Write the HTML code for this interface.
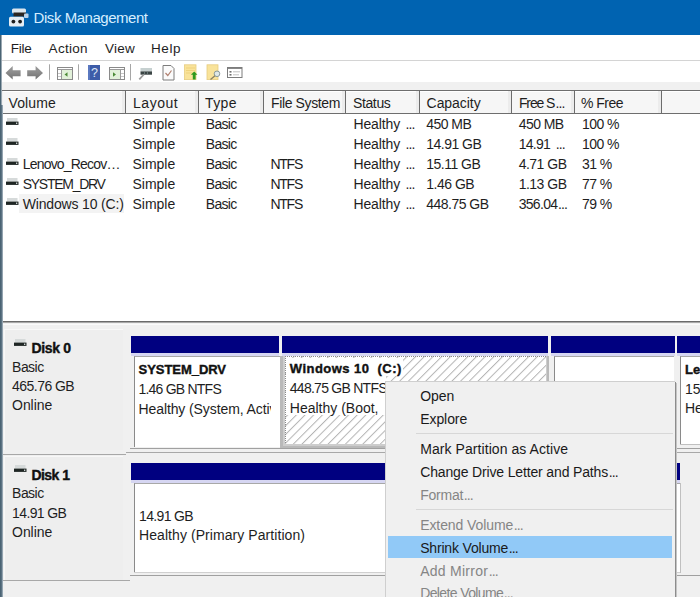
<!DOCTYPE html>
<html><head><meta charset="utf-8">
<style>
html,body{margin:0;padding:0;}
body{width:700px;height:597px;overflow:hidden;position:relative;background:#f0f0f0;font-family:"Liberation Sans",sans-serif;}
.a{position:absolute;}
.tx{position:absolute;white-space:pre;line-height:20px;font-family:"Liberation Sans",sans-serif;}
</style></head><body>
<!-- title bar -->
<div class="a" style="left:0;top:0;width:700px;height:35px;background:#0063b1"></div>
<!-- menu bar -->
<div class="a" style="left:0;top:35px;width:700px;height:25px;background:#fff"></div>
<div class="a" style="left:0;top:60px;width:700px;height:1px;background:#d4d4d4"></div>
<!-- toolbar -->
<div class="a" style="left:0;top:61px;width:700px;height:21px;background:#fff"></div>
<div class="a" style="left:0;top:82px;width:700px;height:8px;background:#f0f0f0"></div>
<div class="a" style="left:0;top:90px;width:700px;height:1px;background:#6e6e6e"></div>
<!-- header -->
<div class="a" style="left:3px;top:91px;width:697px;height:22px;background:#f6f6f6;border-top:1px solid #fff;box-sizing:border-box"></div>
<div class="a" style="left:0;top:113px;width:700px;height:1px;background:#6e6e6e"></div>
<div class="a" style="left:125px;top:90px;width:1px;height:23px;background:#6c6c6c"></div>
<div class="a" style="left:122px;top:91px;width:3px;height:22px;background:#ececec"></div>
<div class="a" style="left:198px;top:90px;width:1px;height:23px;background:#6c6c6c"></div>
<div class="a" style="left:195px;top:91px;width:3px;height:22px;background:#ececec"></div>
<div class="a" style="left:263px;top:90px;width:1px;height:23px;background:#6c6c6c"></div>
<div class="a" style="left:260px;top:91px;width:3px;height:22px;background:#ececec"></div>
<div class="a" style="left:345px;top:90px;width:1px;height:23px;background:#6c6c6c"></div>
<div class="a" style="left:342px;top:91px;width:3px;height:22px;background:#ececec"></div>
<div class="a" style="left:419px;top:90px;width:1px;height:23px;background:#6c6c6c"></div>
<div class="a" style="left:416px;top:91px;width:3px;height:22px;background:#ececec"></div>
<div class="a" style="left:511px;top:90px;width:1px;height:23px;background:#6c6c6c"></div>
<div class="a" style="left:508px;top:91px;width:3px;height:22px;background:#ececec"></div>
<div class="a" style="left:574px;top:90px;width:1px;height:23px;background:#6c6c6c"></div>
<div class="a" style="left:571px;top:91px;width:3px;height:22px;background:#ececec"></div>
<div class="a" style="left:661px;top:90px;width:1px;height:23px;background:#6c6c6c"></div>
<div class="a" style="left:658px;top:91px;width:3px;height:22px;background:#ececec"></div>
<!-- list -->
<div class="a" style="left:0;top:114px;width:700px;height:207px;background:#fff"></div>
<div class="a" style="left:0;top:321px;width:700px;height:1px;background:#6a6a6a"></div>
<div class="a" style="left:0;top:322px;width:700px;height:1px;background:#a8a8a8"></div>

<!-- list icons -->
<div class="a" style="left:19px;top:194px;width:105px;height:19px;background:#f3f3f3"></div>
<svg class="a" style="left:6px;top:118px" width="14" height="8"><rect x="1" y="0" width="10.5" height="3.8" fill="#d6dada"/><rect x="0" y="3.6" width="12.5" height="3.3" fill="#1f2624"/><rect x="10" y="4.6" width="1.3" height="1.3" fill="#dfe6e6"/></svg>
<svg class="a" style="left:6px;top:138px" width="14" height="8"><rect x="1" y="0" width="10.5" height="3.8" fill="#d6dada"/><rect x="0" y="3.6" width="12.5" height="3.3" fill="#1f2624"/><rect x="10" y="4.6" width="1.3" height="1.3" fill="#dfe6e6"/></svg>
<svg class="a" style="left:6px;top:158px" width="14" height="8"><rect x="1" y="0" width="10.5" height="3.8" fill="#d6dada"/><rect x="0" y="3.6" width="12.5" height="3.3" fill="#1f2624"/><rect x="10" y="4.6" width="1.3" height="1.3" fill="#dfe6e6"/></svg>
<svg class="a" style="left:6px;top:178px" width="14" height="8"><rect x="1" y="0" width="10.5" height="3.8" fill="#d6dada"/><rect x="0" y="3.6" width="12.5" height="3.3" fill="#1f2624"/><rect x="10" y="4.6" width="1.3" height="1.3" fill="#dfe6e6"/></svg>
<svg class="a" style="left:6px;top:198px" width="14" height="8"><rect x="1" y="0" width="10.5" height="3.8" fill="#d6dada"/><rect x="0" y="3.6" width="12.5" height="3.3" fill="#1f2624"/><rect x="10" y="4.6" width="1.3" height="1.3" fill="#dfe6e6"/></svg>
<svg class="a" style="left:14px;top:339px" width="14" height="8"><rect x="1" y="0" width="10.5" height="3.8" fill="#d6dada"/><rect x="0" y="3.6" width="12.5" height="3.3" fill="#1f2624"/><rect x="10" y="4.6" width="1.3" height="1.3" fill="#dfe6e6"/></svg>
<svg class="a" style="left:14px;top:465px" width="14" height="8"><rect x="1" y="0" width="10.5" height="3.8" fill="#d6dada"/><rect x="0" y="3.6" width="12.5" height="3.3" fill="#1f2624"/><rect x="10" y="4.6" width="1.3" height="1.3" fill="#dfe6e6"/></svg>
<!-- disk area -->
<div class="a" style="left:3px;top:324px;width:697px;height:1px;background:#fafafa"></div>
<div class="a" style="left:4px;top:329px;width:118px;height:120px;background:#eeeeee;border-top:1px solid #f8f8f8;border-left:1px solid #f8f8f8"></div>
<div class="a" style="left:4px;top:456px;width:118px;height:124px;background:#eeeeee;border-top:1px solid #f8f8f8;border-left:1px solid #f8f8f8"></div>
<div class="a" style="left:131px;top:336px;width:148px;height:17px;background:#000080"></div>
<div class="a" style="left:131px;top:353px;width:148px;height:3px;background:#d6d6f2"></div>
<div class="a" style="left:134px;top:356px;width:146px;height:91px;background:#fff;border-left:1px solid #8a8a8a;border-top:1px solid #a8a8a8;box-sizing:border-box"></div>
<div class="a" style="left:282px;top:336px;width:266px;height:17px;background:#000080"></div>
<div class="a" style="left:282px;top:353px;width:266px;height:3px;background:#d6d6f2"></div>
<div class="a" style="left:280px;top:356px;width:269px;height:92px;background:#b9b9b9"></div>
<div class="a" style="left:283px;top:356px;width:264px;height:90px;background:#cdcdcd"></div>
<svg class="a" style="left:285px;top:356px" width="261" height="88">
<defs><pattern id="hp" patternUnits="userSpaceOnUse" width="6.15" height="6.15" patternTransform="rotate(45)">
<rect width="6.15" height="6.15" fill="#fff"/><rect x="0" y="0" width="1" height="6.15" fill="#b4b4b4"/></pattern></defs>
<rect width="261" height="88" fill="url(#hp)"/>
</svg>
<div class="a" style="left:286px;top:358px;width:117px;height:18px;background:#fff"></div>
<div class="a" style="left:286px;top:376px;width:100px;height:39px;background:#fff"></div>
<div class="a" style="left:285px;top:356px;width:261px;height:1px;background:repeating-linear-gradient(90deg,#8a8a8a 0 1px,transparent 1px 2px)"></div>
<div class="a" style="left:285px;top:356px;width:1px;height:88px;background:repeating-linear-gradient(180deg,#8a8a8a 0 1px,transparent 1px 2px)"></div>
<div class="a" style="left:551px;top:336px;width:124px;height:17px;background:#000080"></div>
<div class="a" style="left:551px;top:353px;width:124px;height:3px;background:#d6d6f2"></div>
<div class="a" style="left:554px;top:356px;width:120px;height:91px;background:#fff;border-left:1px solid #8a8a8a;border-top:1px solid #a8a8a8;box-sizing:border-box"></div>
<div class="a" style="left:677px;top:336px;width:23px;height:17px;background:#000080"></div>
<div class="a" style="left:677px;top:353px;width:23px;height:3px;background:#d6d6f2"></div>
<div class="a" style="left:680px;top:356px;width:20px;height:88px;background:#fff;border-left:1px solid #8a8a8a;border-top:1px solid #a8a8a8;box-sizing:border-box"></div>
<div class="a" style="left:680px;top:444px;width:20px;height:1px;background:#c0c0c0"></div>
<div class="a" style="left:130px;top:448px;width:570px;height:1px;background:#a0a0a0"></div>
<div class="a" style="left:126px;top:452px;width:574px;height:1px;background:#a8a8a8"></div>
<div class="a" style="left:3px;top:454px;width:123px;height:1px;background:#a8a8a8"></div>
<div class="a" style="left:131px;top:463px;width:549px;height:17px;background:#000080"></div>
<div class="a" style="left:131px;top:480px;width:549px;height:3px;background:#d6d6f2"></div>
<div class="a" style="left:134px;top:483px;width:546px;height:89px;background:#fff;border-left:1px solid #8a8a8a;border-top:1px solid #a8a8a8;box-sizing:border-box"></div>
<div class="a" style="left:134px;top:572px;width:546px;height:1px;background:#d0d0d0"></div>
<div class="a" style="left:680px;top:483px;width:1px;height:90px;background:#c0c0c0"></div>
<div class="a" style="left:130px;top:575px;width:570px;height:1px;background:#a0a0a0"></div>
<div class="a" style="left:3px;top:580px;width:127px;height:1px;background:#a8a8a8"></div>
<svg class="a" style="left:14px;top:339px" width="14" height="8"><rect x="1" y="0" width="10.5" height="3.8" fill="#d6dada"/><rect x="0" y="3.6" width="12.5" height="3.3" fill="#1f2624"/><rect x="10" y="4.6" width="1.3" height="1.3" fill="#dfe6e6"/></svg>
<svg class="a" style="left:14px;top:465px" width="14" height="8"><rect x="1" y="0" width="10.5" height="3.8" fill="#d6dada"/><rect x="0" y="3.6" width="12.5" height="3.3" fill="#1f2624"/><rect x="10" y="4.6" width="1.3" height="1.3" fill="#dfe6e6"/></svg>
<!-- context menu -->
<div class="a" style="z-index:10;left:385px;top:381px;width:290px;height:216px;background:#f0f0f0;border-left:1px solid #cfcfcf;border-top:1px solid #cfcfcf;box-sizing:border-box"></div>
<div class="a" style="z-index:10;left:675px;top:382px;width:1px;height:215px;background:#8c8c8c"></div>
<div class="a" style="z-index:10;left:676px;top:383px;width:1px;height:214px;background:#c4c4c4"></div>
<div class="a" style="z-index:10;left:416px;top:433px;width:257px;height:1px;background:#d7d7d7"></div>
<div class="a" style="z-index:10;left:416px;top:509px;width:257px;height:1px;background:#d7d7d7"></div>
<div class="a" style="z-index:10;left:388px;top:536px;width:284px;height:22px;background:#91c9f7"></div>

<!-- title icon -->
<svg class="a" style="left:0;top:0" width="34" height="34">
<rect x="12" y="8.5" width="14" height="5" rx="1.5" fill="#dbe6ee"/>
<rect x="13.5" y="12.5" width="12.5" height="4" fill="#2b2622"/>
<rect x="24" y="13.5" width="4.5" height="4.5" rx="1" fill="#b9d2ea"/>
<rect x="9" y="16.8" width="15" height="9.8" rx="1.5" fill="#e6edf3"/>
<circle cx="13.4" cy="21.6" r="1.9" fill="#1e1e1e"/>
<circle cx="20.1" cy="21.6" r="1.9" fill="#1e1e1e"/>
</svg>
<!-- toolbar icons -->
<svg class="a" style="left:0;top:60px" width="250" height="25">
<defs>
<linearGradient id="ag" x1="0" y1="0" x2="0" y2="1"><stop offset="0" stop-color="#9a9a9a"/><stop offset="0.5" stop-color="#8a8a8a"/><stop offset="1" stop-color="#6e6e6e"/></linearGradient>
</defs>
<path d="M5.5 13 L12.7 6 L12.7 10.2 L20.6 10.2 L20.6 16.2 L12.7 16.2 L12.7 19.6 Z" fill="url(#ag)"/>
<path d="M43 13 L35.6 6 L35.6 10.2 L27.2 10.2 L27.2 16.2 L35.6 16.2 L35.6 19.6 Z" fill="url(#ag)"/>
<rect x="49" y="4.3" width="1" height="15.5" fill="#a6a6a6"/>
<!-- console tree icon -->
<rect x="57.5" y="7.5" width="15" height="12" fill="#fff" stroke="#8a8a8a" stroke-width="1"/>
<rect x="58" y="9" width="14" height="1" fill="#9a9a9a"/>
<rect x="61" y="10" width="1" height="9" fill="#9a9a9a"/>
<rect x="58" y="13" width="3" height="1" fill="#c8c8c8"/><rect x="58" y="16" width="3" height="1" fill="#c8c8c8"/>
<rect x="62" y="10" width="10" height="9" fill="#e2f1da"/>
<path d="M64.5 14.5 L67.5 12.3 L67.5 16.7 Z" fill="#4b8b36"/>
<rect x="78" y="4.3" width="1" height="15.5" fill="#a6a6a6"/>
<!-- help -->
<rect x="88" y="5" width="12" height="15" fill="#3d5ca8"/>
<rect x="88" y="5" width="2" height="15" fill="#5a78c0"/>
<text x="94.5" y="16.8" font-family="Liberation Sans" font-size="12.5" fill="#dfe6f6" text-anchor="middle">?</text>
<!-- action pane icon -->
<rect x="109.5" y="7.5" width="15" height="12" fill="#fff" stroke="#8a8a8a" stroke-width="1"/>
<rect x="110" y="9" width="14" height="1" fill="#9a9a9a"/>
<rect x="120" y="10" width="1" height="9" fill="#9a9a9a"/>
<rect x="121" y="13" width="3" height="1" fill="#c8c8c8"/><rect x="121" y="16" width="3" height="1" fill="#c8c8c8"/>
<rect x="110" y="10" width="10" height="9" fill="#e2f1da"/>
<path d="M116 14.5 L113 12.3 L113 16.7 Z" fill="#4b8b36"/>
<rect x="130" y="4" width="1" height="16.4" fill="#a6a6a6"/>
<!-- connect -->
<rect x="140.5" y="8" width="11.5" height="3.5" fill="#c6d0d0"/>
<rect x="140.5" y="11.4" width="11.5" height="3.3" fill="#3a4444"/>
<rect x="144" y="12.3" width="1" height="1.4" fill="#7a8a8a"/><rect x="147" y="12.3" width="1" height="1.4" fill="#7a8a8a"/>
<path d="M139.3 19.3 L143.8 14.5" stroke="#9a9a9a" stroke-width="1.8"/>
<!-- doc check -->
<path d="M163 5.5 L171 5.5 L174 8.5 L174 20 L163 20 Z" fill="#fbfbfb" stroke="#7c7c7c" stroke-width="1"/>
<path d="M165.5 13 L167.8 15.5 L171.5 10.5" stroke="#b08070" stroke-width="1.2" fill="none"/>
<!-- yellow doc arrow -->
<rect x="184.5" y="4.8" width="11.5" height="14.8" fill="#f9e39a" stroke="#e6cc80" stroke-width="0.8"/>
<path d="M186 8 H195 M186 10.5 H195 M186 13 H195" stroke="#e8c868" stroke-width="0.6"/>
<path d="M194.2 11.5 L197.5 14.8 L195.6 14.8 L195.6 19.6 L192.8 19.6 L192.8 14.8 L190.9 14.8 Z" fill="#2e9a1e"/>
<!-- yellow doc magnifier -->
<rect x="207" y="4.8" width="11" height="14.8" fill="#f9e39a" stroke="#e6cc80" stroke-width="0.8"/>
<circle cx="217" cy="13.8" r="2.8" fill="#dfe8e8" stroke="#8a9a9a" stroke-width="1"/>
<path d="M215 15.8 L210.5 19.5" stroke="#8a8060" stroke-width="1.3"/>
<!-- properties -->
<rect x="227.5" y="7.5" width="14.5" height="10" fill="#fff" stroke="#7c7c7c" stroke-width="1"/>
<rect x="227.5" y="7.5" width="14.5" height="1.4" fill="#7c7c7c"/>
<rect x="229.5" y="11" width="2" height="1.6" fill="#707070"/>
<rect x="229.5" y="14" width="2" height="1.6" fill="#707070"/>
<path d="M233 11.8 H240 M233 14.8 H239" stroke="#b0b0b0" stroke-width="0.8"/>
</svg>
<!-- left border -->
<div class="a" style="z-index:20;left:0;top:35px;width:1px;height:562px;background:#4a6474"></div>
<div class="a" style="z-index:20;left:1px;top:35px;width:1px;height:70px;background:#9aa8b2"></div>
<div class="a" style="z-index:20;left:1px;top:105px;width:1px;height:492px;background:#5c7282"></div>
<div class="a" style="z-index:20;left:2px;top:105px;width:1px;height:492px;background:#93a4b0"></div>
<div class="tx" style="left:33.6px;top:8.2px;font-size:15px;font-weight:normal;color:#d6eeff;letter-spacing:-0.46px;">Disk Management</div>
<div class="tx" style="left:10.7px;top:38.7px;font-size:13.5px;font-weight:normal;color:#1e1e1e;letter-spacing:-0.19px;">File</div>
<div class="tx" style="left:48.6px;top:38.7px;font-size:13.5px;font-weight:normal;color:#1e1e1e;letter-spacing:0.29px;">Action</div>
<div class="tx" style="left:105.0px;top:38.7px;font-size:13.5px;font-weight:normal;color:#1e1e1e;letter-spacing:0.24px;">View</div>
<div class="tx" style="left:151.0px;top:38.7px;font-size:13.5px;font-weight:normal;color:#1e1e1e;letter-spacing:0.56px;">Help</div>
<div class="tx" style="left:8.5px;top:92.8px;font-size:14px;font-weight:normal;color:#1e1e1e;letter-spacing:0.13px;">Volume</div>
<div class="tx" style="left:133.1px;top:92.8px;font-size:14px;font-weight:normal;color:#1e1e1e;letter-spacing:0.49px;">Layout</div>
<div class="tx" style="left:205.0px;top:92.8px;font-size:14px;font-weight:normal;color:#1e1e1e;letter-spacing:0.41px;">Type</div>
<div class="tx" style="left:271.0px;top:92.8px;font-size:14px;font-weight:normal;color:#1e1e1e;letter-spacing:-0.38px;">File System</div>
<div class="tx" style="left:353.0px;top:92.8px;font-size:14px;font-weight:normal;color:#1e1e1e;letter-spacing:-0.38px;">Status</div>
<div class="tx" style="left:426.6px;top:92.8px;font-size:14px;font-weight:normal;color:#1e1e1e;letter-spacing:-0.06px;">Capacity</div>
<div class="tx" style="left:518.9px;top:92.8px;font-size:14px;font-weight:normal;color:#1e1e1e;letter-spacing:-1.10px;">Free S</div>
<div class="tx" style="left:581.0px;top:92.8px;font-size:14px;font-weight:normal;color:#1e1e1e;letter-spacing:-0.52px;">% Free</div>
<div class="tx" style="left:555.5px;top:92.8px;font-size:14px;font-weight:normal;color:#1e1e1e;letter-spacing:-0.89px;">...</div>
<div class="tx" style="left:132.5px;top:113.8px;font-size:14px;font-weight:normal;color:#1e1e1e;letter-spacing:-0.02px;">Simple</div>
<div class="tx" style="left:205.7px;top:113.8px;font-size:14px;font-weight:normal;color:#1e1e1e;letter-spacing:-0.65px;">Basic</div>
<div class="tx" style="left:353.5px;top:113.8px;font-size:14px;font-weight:normal;color:#1e1e1e;letter-spacing:-0.14px;">Healthy</div>
<div class="tx" style="left:405.5px;top:113.8px;font-size:14px;font-weight:normal;color:#1e1e1e;letter-spacing:-0.89px;">...</div>
<div class="tx" style="left:426.3px;top:113.8px;font-size:14px;font-weight:normal;color:#1e1e1e;letter-spacing:-0.56px;">450 MB</div>
<div class="tx" style="left:518.7px;top:113.8px;font-size:14px;font-weight:normal;color:#1e1e1e;letter-spacing:-0.56px;">450 MB</div>
<div class="tx" style="left:582.0px;top:113.8px;font-size:14px;font-weight:normal;color:#1e1e1e;letter-spacing:-0.56px;">100 %</div>
<div class="tx" style="left:132.5px;top:133.8px;font-size:14px;font-weight:normal;color:#1e1e1e;letter-spacing:-0.02px;">Simple</div>
<div class="tx" style="left:205.7px;top:133.8px;font-size:14px;font-weight:normal;color:#1e1e1e;letter-spacing:-0.65px;">Basic</div>
<div class="tx" style="left:353.5px;top:133.8px;font-size:14px;font-weight:normal;color:#1e1e1e;letter-spacing:-0.14px;">Healthy</div>
<div class="tx" style="left:405.5px;top:133.8px;font-size:14px;font-weight:normal;color:#1e1e1e;letter-spacing:-0.89px;">...</div>
<div class="tx" style="left:426.3px;top:133.8px;font-size:14px;font-weight:normal;color:#1e1e1e;letter-spacing:-0.52px;">14.91 GB</div>
<div class="tx" style="left:518.7px;top:133.8px;font-size:14px;font-weight:normal;color:#1e1e1e;letter-spacing:-0.75px;">14.91</div>
<div class="tx" style="left:555.8px;top:133.8px;font-size:14px;font-weight:normal;color:#1e1e1e;letter-spacing:-0.89px;">...</div>
<div class="tx" style="left:582.0px;top:133.8px;font-size:14px;font-weight:normal;color:#1e1e1e;letter-spacing:-0.56px;">100 %</div>
<div class="tx" style="left:22.7px;top:153.8px;font-size:14px;font-weight:normal;color:#1e1e1e;letter-spacing:-0.80px;">Lenovo_Recov…</div>
<div class="tx" style="left:132.5px;top:153.8px;font-size:14px;font-weight:normal;color:#1e1e1e;letter-spacing:-0.02px;">Simple</div>
<div class="tx" style="left:205.7px;top:153.8px;font-size:14px;font-weight:normal;color:#1e1e1e;letter-spacing:-0.65px;">Basic</div>
<div class="tx" style="left:270.4px;top:153.8px;font-size:14px;font-weight:normal;color:#1e1e1e;letter-spacing:-1.22px;">NTFS</div>
<div class="tx" style="left:353.5px;top:153.8px;font-size:14px;font-weight:normal;color:#1e1e1e;letter-spacing:-0.14px;">Healthy</div>
<div class="tx" style="left:405.5px;top:153.8px;font-size:14px;font-weight:normal;color:#1e1e1e;letter-spacing:-0.89px;">...</div>
<div class="tx" style="left:426.3px;top:153.8px;font-size:14px;font-weight:normal;color:#1e1e1e;letter-spacing:-0.51px;">15.11 GB</div>
<div class="tx" style="left:518.7px;top:153.8px;font-size:14px;font-weight:normal;color:#1e1e1e;letter-spacing:-0.51px;">4.71 GB</div>
<div class="tx" style="left:582.0px;top:153.8px;font-size:14px;font-weight:normal;color:#1e1e1e;letter-spacing:-0.56px;">31 %</div>
<div class="tx" style="left:22.7px;top:173.8px;font-size:14px;font-weight:normal;color:#1e1e1e;letter-spacing:-1.27px;">SYSTEM_DRV</div>
<div class="tx" style="left:132.5px;top:173.8px;font-size:14px;font-weight:normal;color:#1e1e1e;letter-spacing:-0.02px;">Simple</div>
<div class="tx" style="left:205.7px;top:173.8px;font-size:14px;font-weight:normal;color:#1e1e1e;letter-spacing:-0.65px;">Basic</div>
<div class="tx" style="left:270.4px;top:173.8px;font-size:14px;font-weight:normal;color:#1e1e1e;letter-spacing:-1.22px;">NTFS</div>
<div class="tx" style="left:353.5px;top:173.8px;font-size:14px;font-weight:normal;color:#1e1e1e;letter-spacing:-0.14px;">Healthy</div>
<div class="tx" style="left:405.5px;top:173.8px;font-size:14px;font-weight:normal;color:#1e1e1e;letter-spacing:-0.89px;">...</div>
<div class="tx" style="left:426.3px;top:173.8px;font-size:14px;font-weight:normal;color:#1e1e1e;letter-spacing:-0.51px;">1.46 GB</div>
<div class="tx" style="left:518.7px;top:173.8px;font-size:14px;font-weight:normal;color:#1e1e1e;letter-spacing:-0.51px;">1.13 GB</div>
<div class="tx" style="left:582.0px;top:173.8px;font-size:14px;font-weight:normal;color:#1e1e1e;letter-spacing:-0.56px;">77 %</div>
<div class="tx" style="left:22.7px;top:193.8px;font-size:14px;font-weight:normal;color:#1e1e1e;letter-spacing:-0.16px;">Windows 10 (C:)</div>
<div class="tx" style="left:132.5px;top:193.8px;font-size:14px;font-weight:normal;color:#1e1e1e;letter-spacing:-0.02px;">Simple</div>
<div class="tx" style="left:205.7px;top:193.8px;font-size:14px;font-weight:normal;color:#1e1e1e;letter-spacing:-0.65px;">Basic</div>
<div class="tx" style="left:270.4px;top:193.8px;font-size:14px;font-weight:normal;color:#1e1e1e;letter-spacing:-1.22px;">NTFS</div>
<div class="tx" style="left:353.5px;top:193.8px;font-size:14px;font-weight:normal;color:#1e1e1e;letter-spacing:-0.14px;">Healthy</div>
<div class="tx" style="left:405.5px;top:193.8px;font-size:14px;font-weight:normal;color:#1e1e1e;letter-spacing:-0.89px;">...</div>
<div class="tx" style="left:426.3px;top:193.8px;font-size:14px;font-weight:normal;color:#1e1e1e;letter-spacing:-0.52px;">448.75 GB</div>
<div class="tx" style="left:518.7px;top:193.8px;font-size:14px;font-weight:normal;color:#1e1e1e;letter-spacing:-0.70px;">356.04</div>
<div class="tx" style="left:558.0px;top:193.8px;font-size:14px;font-weight:normal;color:#1e1e1e;letter-spacing:-0.89px;">...</div>
<div class="tx" style="left:582.0px;top:193.8px;font-size:14px;font-weight:normal;color:#1e1e1e;letter-spacing:-0.56px;">79 %</div>
<div class="tx" style="left:31.4px;top:337.9px;font-size:14px;font-weight:bold;color:#111;letter-spacing:-0.33px;-webkit-text-stroke:0.4px currentColor;">Disk 0</div>
<div class="tx" style="left:12.1px;top:357.4px;font-size:14px;font-weight:normal;color:#1e1e1e;letter-spacing:-0.55px;">Basic</div>
<div class="tx" style="left:12.1px;top:376.4px;font-size:14px;font-weight:normal;color:#1e1e1e;letter-spacing:-0.55px;">465.76 GB</div>
<div class="tx" style="left:12.1px;top:395.4px;font-size:14px;font-weight:normal;color:#1e1e1e;letter-spacing:-0.08px;">Online</div>
<div class="tx" style="left:31.4px;top:464.5px;font-size:14px;font-weight:bold;color:#111;letter-spacing:-0.54px;-webkit-text-stroke:0.4px currentColor;">Disk 1</div>
<div class="tx" style="left:12.1px;top:483.4px;font-size:14px;font-weight:normal;color:#1e1e1e;letter-spacing:-0.55px;">Basic</div>
<div class="tx" style="left:12.1px;top:503.0px;font-size:14px;font-weight:normal;color:#1e1e1e;letter-spacing:-0.64px;">14.91 GB</div>
<div class="tx" style="left:12.1px;top:521.6px;font-size:14px;font-weight:normal;color:#1e1e1e;letter-spacing:-0.08px;">Online</div>
<div class="tx" style="left:138.5px;top:359.9px;font-size:13px;font-weight:bold;color:#111;letter-spacing:-0.04px;-webkit-text-stroke:0.4px currentColor;">SYSTEM_DRV</div>
<div class="tx" style="left:138.5px;top:378.9px;font-size:14px;font-weight:normal;color:#1e1e1e;letter-spacing:-0.78px;">1.46 GB NTFS</div>
<div class="tx" style="left:138.5px;top:398.7px;font-size:14px;font-weight:normal;color:#1e1e1e;letter-spacing:0.00px;width:132px;overflow:hidden;letter-spacing:-0.1px">Healthy (System, Active, Primary Partition)</div>
<div class="tx" style="left:289.8px;top:359.1px;font-size:13px;font-weight:bold;color:#111;letter-spacing:0.46px;-webkit-text-stroke:0.4px currentColor;">Windows 10  (C:)</div>
<div class="tx" style="left:289.8px;top:378.0px;font-size:14px;font-weight:normal;color:#1e1e1e;letter-spacing:-0.74px;">448.75 GB NTFS</div>
<div class="tx" style="left:289.8px;top:397.8px;font-size:14px;font-weight:normal;color:#1e1e1e;letter-spacing:0.00px;">Healthy (Boot,</div>
<div class="tx" style="left:685.0px;top:359.5px;font-size:13px;font-weight:bold;color:#111;letter-spacing:0.00px;-webkit-text-stroke:0.4px currentColor;">Le</div>
<div class="tx" style="left:685.0px;top:378.5px;font-size:14px;font-weight:normal;color:#1e1e1e;letter-spacing:0.00px;">15</div>
<div class="tx" style="left:685.0px;top:398.0px;font-size:14px;font-weight:normal;color:#1e1e1e;letter-spacing:0.00px;">He</div>
<div class="tx" style="left:139.0px;top:505.7px;font-size:14px;font-weight:normal;color:#1e1e1e;letter-spacing:-0.64px;">14.91 GB</div>
<div class="tx" style="left:139.0px;top:524.6px;font-size:14px;font-weight:normal;color:#1e1e1e;letter-spacing:0.07px;">Healthy (Primary Partition)</div>
<div class="tx" style="left:420.2px;top:386.3px;font-size:14px;font-weight:normal;color:#1a1a1a;letter-spacing:-0.06px;z-index:11">Open</div>
<div class="tx" style="left:420.2px;top:408.7px;font-size:14px;font-weight:normal;color:#1a1a1a;letter-spacing:-0.07px;z-index:11">Explore</div>
<div class="tx" style="left:420.2px;top:438.5px;font-size:14px;font-weight:normal;color:#1a1a1a;letter-spacing:0.07px;z-index:11">Mark Partition as Active</div>
<div class="tx" style="left:420.2px;top:461.8px;font-size:14px;font-weight:normal;color:#1a1a1a;letter-spacing:-0.15px;z-index:11">Change Drive Letter and Paths</div>
<div class="tx" style="left:608.7px;top:461.8px;font-size:14px;font-weight:normal;color:#1a1a1a;letter-spacing:-0.89px;z-index:11">...</div>
<div class="tx" style="left:420.2px;top:485.0px;font-size:14px;font-weight:normal;color:#858585;letter-spacing:-0.22px;z-index:11">Format</div>
<div class="tx" style="left:463.7px;top:485.0px;font-size:14px;font-weight:normal;color:#858585;letter-spacing:-0.89px;z-index:11">...</div>
<div class="tx" style="left:420.2px;top:514.5px;font-size:14px;font-weight:normal;color:#858585;letter-spacing:-0.09px;z-index:11">Extend Volume</div>
<div class="tx" style="left:513.7px;top:514.5px;font-size:14px;font-weight:normal;color:#858585;letter-spacing:-0.89px;z-index:11">...</div>
<div class="tx" style="left:420.2px;top:537.6px;font-size:14px;font-weight:normal;color:#1a1a1a;letter-spacing:-0.18px;z-index:11">Shrink Volume</div>
<div class="tx" style="left:508.7px;top:537.6px;font-size:14px;font-weight:normal;color:#1a1a1a;letter-spacing:-0.89px;z-index:11">...</div>
<div class="tx" style="left:420.2px;top:560.5px;font-size:14px;font-weight:normal;color:#858585;letter-spacing:0.26px;z-index:11">Add Mirror</div>
<div class="tx" style="left:488.7px;top:560.5px;font-size:14px;font-weight:normal;color:#858585;letter-spacing:-0.89px;z-index:11">...</div>
<div class="tx" style="left:420.2px;top:583.3px;font-size:14px;font-weight:normal;color:#858585;letter-spacing:-0.62px;z-index:11">Delete Volume</div>
<div class="tx" style="left:503.7px;top:583.3px;font-size:14px;font-weight:normal;color:#858585;letter-spacing:-0.89px;z-index:11">...</div>
</body></html>
